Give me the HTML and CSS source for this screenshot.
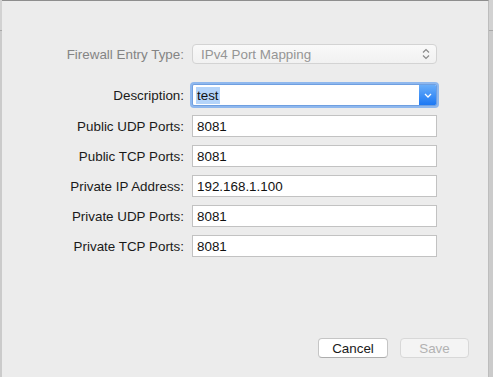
FILE: index.html
```html
<!DOCTYPE html>
<html>
<head>
    <meta name="viewport" content="width=device-width, initial-scale=1.0">
    <title>Firewall Entry</title>
    <link rel="stylesheet" href="styles.css">
</head>
<body>
    <div class="sheet">
        <div class="form">
            <label class="label disabled">Firewall Entry Type:</label>
            <div class="popup">
                <span>IPv4 Port Mapping</span>
                <svg class="updown" width="8" height="12" viewBox="0 0 8 12">
                    <path d="M1 4.5 L4 1.5 L7 4.5" fill="none" stroke="#8a8a8a" stroke-width="1.2"/>
                    <path d="M1 7.5 L4 10.5 L7 7.5" fill="none" stroke="#8a8a8a" stroke-width="1.2"/>
                </svg>
            </div>

            <label class="label">Description:</label>
            <div class="combo">
                <span class="value"><span class="selected">test</span></span>
                <span class="combo-button">
                    <svg width="8" height="5" viewBox="0 0 8 5">
                        <path d="M1 1 L4 4 L7 1" fill="none" stroke="#fff" stroke-width="1.3"/>
                    </svg>
                </span>
            </div>

            <label class="label">Public UDP Ports:</label>
            <div class="field">8081</div>

            <label class="label">Public TCP Ports:</label>
            <div class="field">8081</div>

            <label class="label">Private IP Address:</label>
            <div class="field">192.168.1.100</div>

            <label class="label">Private UDP Ports:</label>
            <div class="field">8081</div>

            <label class="label">Private TCP Ports:</label>
            <div class="field">8081</div>
        </div>

        <div class="buttons">
            <button class="button">Cancel</button>
            <button class="button" disabled>Save</button>
        </div>
    </div>
</body>
</html>
```

FILE: styles.css
```css
html, body {
    margin: 0;
    height: 100%;
    overflow: hidden;
}

body {
    font-family: "Liberation Sans", Arial, sans-serif;
    font-size: 13.4px;
    color: #1a1a1a;
    background: linear-gradient(to bottom, #d2d2d2 0, #d2d2d2 30px, #a9a9a9 30px, #a9a9a9 31px, #cbcbcb 31px);
}

.sheet {
    box-sizing: border-box;
    margin-left: 2px;
    width: 487px;
    height: 377px;
    background-color: #ececec;
    border-top: 1px solid #8e8e8e;
    border-right: 1px solid #bdbdbd;
    display: flex;
    flex-direction: column;
}

.form {
    display: grid;
    grid-template-columns: 182px 245px;
    column-gap: 8px;
    row-gap: 8px;
    padding-top: 43px;
    align-items: center;
}

.label {
    text-align: right;
    white-space: nowrap;
}

.label.disabled {
    color: #848484;
    margin-bottom: 12px;
}

.popup {
    box-sizing: border-box;
    height: 20px;
    margin-bottom: 12px;
    border: 1px solid #d3d3d3;
    border-radius: 4px;
    background: linear-gradient(to bottom, #f9f9f9, #f1f1f1);
    color: #959595;
    display: flex;
    align-items: center;
    justify-content: space-between;
    padding: 0 6px 0 8px;
}

.updown {
    display: block;
}

.combo {
    box-sizing: border-box;
    height: 22px;
    margin-bottom: 1px;
    border: 1px solid #6f9fe0;
    border-radius: 2px;
    box-shadow: 0 0 0 2px #8fb8ee;
    background-color: #fff;
    display: flex;
    align-items: stretch;
}

.value {
    flex: 1;
    display: flex;
    align-items: center;
    padding-left: 3px;
    color: #111;
}

.selected {
    background-color: #b4d4fa;
    padding: 1px 1px;
}

.combo-button {
    width: 17px;
    background: linear-gradient(to bottom, #6aaef9, #1c78f4);
    border-radius: 0 1px 1px 0;
    display: flex;
    align-items: center;
    justify-content: center;
}

.field {
    box-sizing: border-box;
    height: 22px;
    border: 1px solid #c2c2c2;
    background-color: #fff;
    padding-left: 4px;
    display: flex;
    align-items: center;
    color: #111;
}

.buttons {
    margin-top: auto;
    display: flex;
    justify-content: flex-end;
    gap: 12px;
    padding: 0 19px 19px 0;
}

.button {
    font-family: inherit;
    font-size: 13.4px;
    width: 70px;
    height: 20px;
    padding: 0;
    border: 1px solid #c5c5c5;
    border-bottom-color: #adadad;
    border-radius: 4px;
    background-color: #fff;
    color: #1a1a1a;
}

.button:disabled {
    width: 69px;
    background-color: #f4f4f4;
    border-color: #d8d8d8;
    color: #b2b2b2;
}
```
